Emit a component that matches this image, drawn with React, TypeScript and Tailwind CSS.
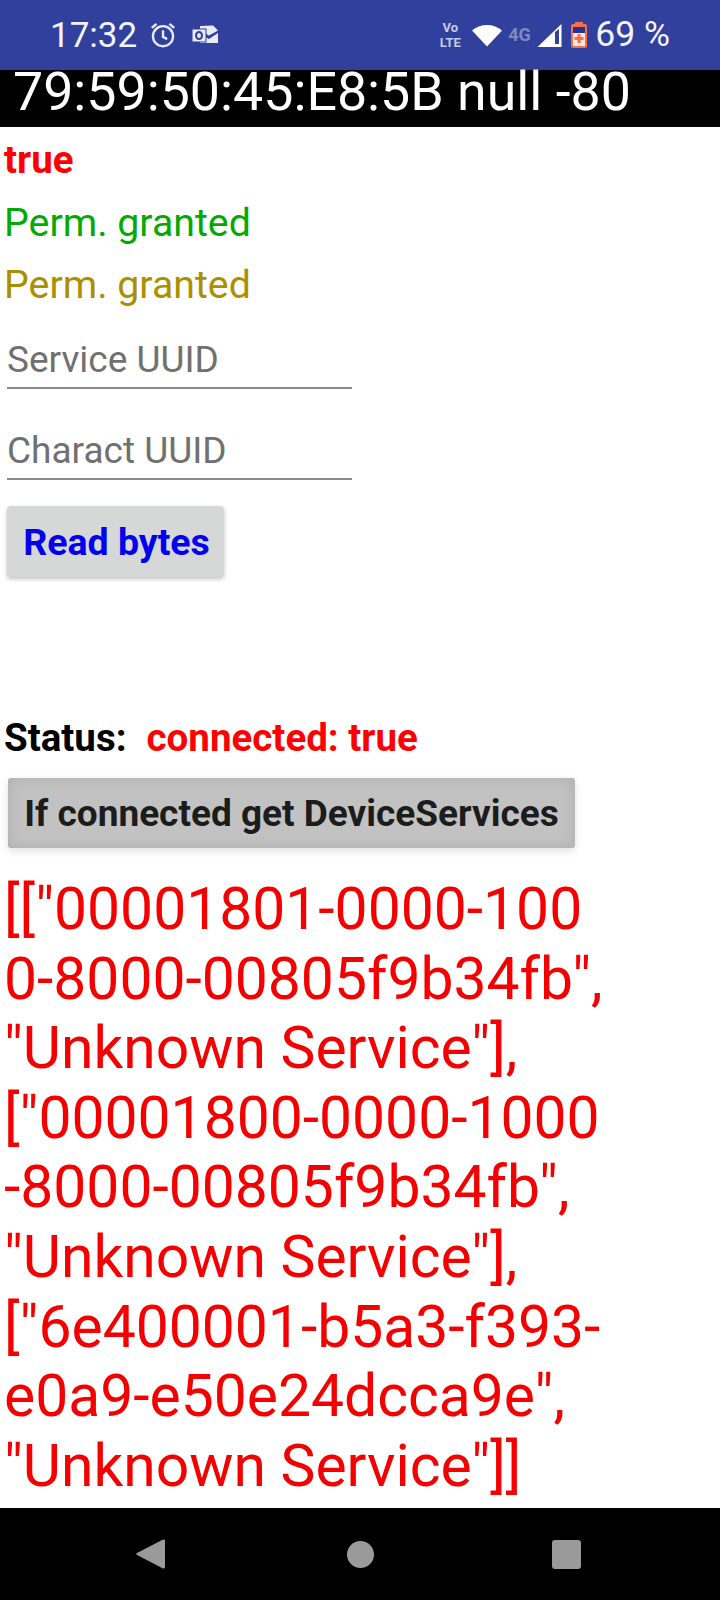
const lines = [
  '[["00001801-0000-100',
  '0-8000-00805f9b34fb",',
  '"Unknown Service"],',
  '["00001800-0000-1000',
  '-8000-00805f9b34fb",',
  '"Unknown Service"],',
  '["6e400001-b5a3-f393-',
  'e0a9-e50e24dcca9e",',
  '"Unknown Service"]]',
];

function Alarm() {
  return (
    <svg width="26" height="26" viewBox="1 1 22 22" fill="none" stroke="#e8ebf6" strokeWidth="2">
      <circle cx="12" cy="13" r="8.5" />
      <path d="M12 8v5.5l3.5 2M2.5 6l4-3.5M21.5 6l-4-3.5" />
    </svg>
  );
}

function Outlook() {
  return (
    <svg width="28" height="20" viewBox="0 0 28 20">
      <path d="M9 1l13-0.5 5 5-9 5-9-5z" fill="#e8ebf6" />
      <path d="M9 9l9 5 9-6v10H9z" fill="#e8ebf6" />
      <rect x="1" y="4" width="14" height="13" fill="#e8ebf6" stroke="#31409c" strokeWidth="1" />
      <ellipse cx="8" cy="10.5" rx="3" ry="3.5" fill="none" stroke="#31409c" strokeWidth="2" />
    </svg>
  );
}

function Status() {
  return (
    <div className="h-[70px] bg-[#31409c] flex items-center text-[#f2f4fb] shrink-0 pl-[50px] pr-[50px]">
      <span className="text-[35px] leading-none">17:32</span>
      <span className="ml-[13px] flex"><Alarm /></span>
      <span className="ml-[15px] flex"><Outlook /></span>
      <div className="ml-auto flex items-center">
        <span className="flex flex-col items-center text-[13px] leading-[15.5px] font-bold text-[#c5cbe8] w-[26px]">
          <span>Vo</span>
          <span>LTE</span>
        </span>
        <svg className="ml-[9px]" width="30" height="24" viewBox="0 0 30 24">
          <path d="M15 23.5L0 7.5C8 0 22 0 30 7.5z" fill="#fff" />
        </svg>
        <span className="ml-[6px] text-[18px] leading-none font-bold text-[#8088c4] w-[24px]">4G</span>
        <svg className="ml-[5px]" width="25" height="25" viewBox="0 0 25 25">
          <path d="M0.5 24L24.5 1v23z" fill="#fff" />
          <path d="M18 9v12h4V6z" fill="#31409c" />
        </svg>
        <svg className="ml-[9px]" width="16" height="26" viewBox="0 0 16 26">
          <rect x="4" y="0" width="8" height="3" fill="#f4704c" />
          <rect x="0" y="2" width="16" height="24" rx="2" fill="#f4704c" />
          <rect x="2" y="5" width="12" height="6" fill="#26338c" />
          <rect x="2" y="11" width="12" height="13" fill="#fbe7df" />
          <path d="M6.5 12h3v3h3v3h-3v3h-3v-3h-3v-3h3z" fill="#f4704c" />
        </svg>
        <span className="ml-[8px] text-[35.5px] leading-none">69 %</span>
      </div>
    </div>
  );
}

function Field({ label }: { label: string }) {
  return (
    <div className="w-[345px] ml-[7px] border-b-2 border-[#8a8a8a] text-[37px] leading-[40px] text-[#707070] pb-[7px]">
      {label}
    </div>
  );
}

export default function App() {
  return (
    <div className="w-[720px] h-[1600px] bg-white flex flex-col overflow-hidden font-['Roboto',sans-serif]">
      <Status />
      <div className="h-[57px] bg-black text-white text-[53.7px] leading-[44px] pl-[13px] shrink-0 whitespace-nowrap">
        79:59:50:45:E8:5B null -80
      </div>
      <div className="flex-1 min-h-0 flex flex-col">
        <div className="mt-[12px] pl-[4px] text-[38.5px] leading-[42px] font-bold text-[#ff0000]">true</div>
        <div className="mt-[20px] pl-[4px] text-[39.3px] leading-[44px] text-[#00aa00]">Perm. granted</div>
        <div className="mt-[18px] pl-[4px] text-[39.3px] leading-[44px] text-[#aa9000]">Perm. granted</div>
        <div className="mt-[33px]"><Field label="Service UUID" /></div>
        <div className="mt-[42px]"><Field label="Charact UUID" /></div>
        <button className="mt-[26px] ml-[7px] w-[217px] h-[71px] pt-[1px] pl-[2px] rounded-[4px] bg-[#d6d7d7] shadow-[0_2px_4px_rgba(0,0,0,0.25)] text-[37.5px] font-bold text-[#0000ee]">
          Read bytes
        </button>
        <div className="mt-[140px] pl-[4px] flex text-[38.5px] leading-[42px] font-bold">
          <span className="text-black">Status:</span>
          <span className="ml-[20px] text-[#ff0000]">connected: true</span>
        </div>
        <div className="mt-[19px] ml-[8px] w-[567px] h-[70px] pt-[2px] rounded-[3px] bg-[#c2c2c2] shadow-[inset_0_0_14px_rgba(0,0,0,0.1),0_3px_8px_rgba(0,0,0,0.12)] flex items-center justify-center text-[37px] font-bold text-[#1c1c1c]">
          If connected get DeviceServices
        </div>
        <div className="mt-[26px] pl-[4px] text-[58.8px] leading-[69.6px] text-[#f40000] whitespace-pre">
          {lines.map((l) => (
            <div key={l}>{l}</div>
          ))}
        </div>
      </div>
      <div className="h-[92px] bg-black shrink-0 flex items-center justify-center pr-[4px]">
        <svg className="mr-[181px] -mt-[1px]" width="30" height="32" viewBox="0 0 30 32">
          <path d="M27 1.5a1.5 1.5 0 0 1 2 1.5v26a1.5 1.5 0 0 1-2 1.5L1 17a1.2 1.2 0 0 1 0-2z" fill="#9a9a9a" />
        </svg>
        <div className="w-[27px] h-[27px] rounded-full bg-[#9a9a9a]" />
        <div className="ml-[178px] w-[29px] h-[29px] rounded-[3px] bg-[#9a9a9a]" />
      </div>
    </div>
  );
}
